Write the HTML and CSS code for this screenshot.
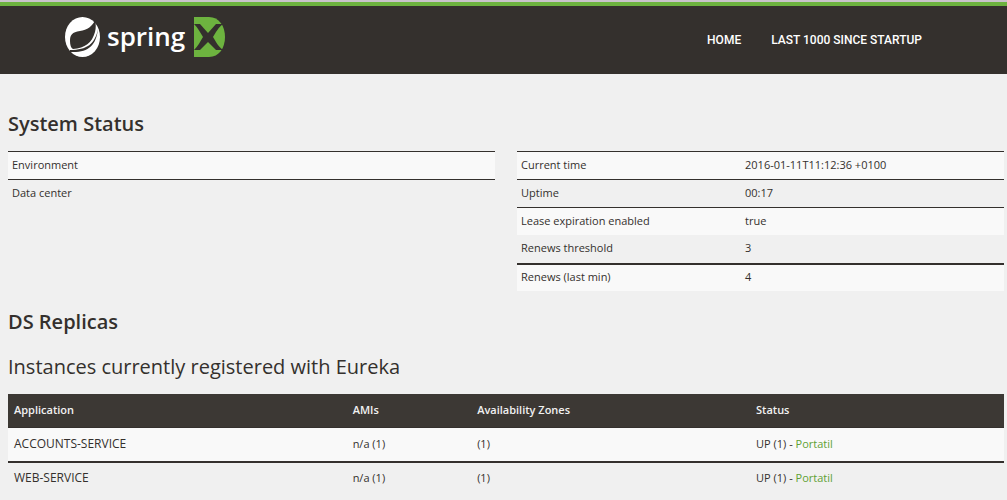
FILE: index.html
```html
<!DOCTYPE html>
<html lang="en">
<head>
<meta charset="utf-8">
<title>Eureka</title>
<link rel="stylesheet" href="styles.css">
</head>
<body>
<header class="navbar">
  <a class="brand" href="#" aria-label="Spring XD">
    <svg class="brand-leaf" viewBox="0 0 36 40" aria-hidden="true">
      <ellipse cx="17.5" cy="20" rx="17.5" ry="20" fill="#fff"/>
      <path d="M30 3C28 9 22 13 15 14C7 15 5 18 5 24C5 28 6 31 8 32C20 31 27 26 30 15C31 11 31 7 30 3Z" fill="#34302d"/>
      <path d="M33 12C30 27 22 33 5 33V35C23 36 31 29 33 12Z" fill="#34302d"/>
    </svg>
    <span class="brand-name">spring</span>
    <svg class="brand-xd" viewBox="0 0 32 40" aria-hidden="true">
      <path d="M0 0H15C25 0 31 9 31 20S25 40 15 40H0Z" fill="#6db33f"/>
      <path d="M0 7H6L14 16L22 7H29C24 11 22 15 19 20C22 25 24 29 29 33H22L14 25L6 33H0C4 29 6 25 9 20C6 15 4 11 0 7Z" fill="#34302d"/>
    </svg>
  </a>
  <nav class="nav">
    <a href="#">HOME</a>
    <a href="#">LAST 1000 SINCE STARTUP</a>
  </nav>
</header>
<main class="content">
  <h1 class="heading">System Status</h1>
  <div class="status">
    <table class="facts">
      <tr><td>Environment</td><td></td></tr>
      <tr><td>Data center</td><td></td></tr>
    </table>
    <table class="facts">
      <tr><td>Current time</td><td>2016-01-11T11:12:36 +0100</td></tr>
      <tr><td>Uptime</td><td>00:17</td></tr>
      <tr><td>Lease expiration enabled</td><td>true</td></tr>
      <tr class="no-rule"><td>Renews threshold</td><td>3</td></tr>
      <tr class="thick-rule"><td>Renews (last min)</td><td>4</td></tr>
    </table>
  </div>
  <h1 class="heading">DS Replicas</h1>
  <h2 class="heading heading-light">Instances currently registered with Eureka</h2>
  <table class="instances">
    <thead>
      <tr><th class="col-app">Application</th><th class="col-ami">AMIs</th><th class="col-zone">Availability Zones</th><th>Status</th></tr>
    </thead>
    <tbody>
      <tr><td class="app">ACCOUNTS-SERVICE</td><td>n/a (1)</td><td>(1)</td><td>UP (1) - <a href="#">Portatil</a></td></tr>
      <tr><td class="app">WEB-SERVICE</td><td>n/a (1)</td><td>(1)</td><td>UP (1) - <a href="#">Portatil</a></td></tr>
    </tbody>
  </table>
</main>
</body>
</html>
```
FILE: styles.css
```css
* { box-sizing: border-box; }
body {
  margin: 0;
  background: #f0f0f0;
  color: #34302d;
  font-family: "Open Sans", "Noto Sans", sans-serif;
  font-size: 11px;
  border-top: 2px solid #c9c4cb;
}
a { text-decoration: none; }
.navbar {
  display: flex;
  justify-content: space-between;
  align-items: center;
  height: 72px;
  padding: 0 85px 0 65px;
  background: #34302d;
  border-top: 4px solid #6db33f;
}
.brand {
  display: flex;
  align-items: center;
  gap: 6px;
  padding-bottom: 6px;
  color: #fff;
}
.brand-leaf { width: 36px; height: 40px; }
.brand-xd { width: 32px; height: 40px; margin-left: 3px; }
.brand-name {
  font-family: "Open Sans", sans-serif;
  font-size: 26px;
  font-weight: 600;
  line-height: 38px;
  padding-bottom: 2px;
}
.nav { display: flex; gap: 30px; }
.nav a {
  color: #fff;
  font-family: Roboto, sans-serif;
  font-size: 12px;
  font-weight: 500;
  line-height: 20px;
}
.content { padding: 36px 3px 0 8px; }
.heading {
  margin: 0 0 13px;
  font-size: 20px;
  line-height: 28px;
  font-weight: 600;
}
.heading-light { margin-top: 17px; font-weight: 400; }
.status {
  display: grid;
  grid-template-columns: 1fr 1fr;
  gap: 22px;
  align-items: start;
  margin-bottom: 17px;
}
table {
  width: 100%;
  border-collapse: separate;
  border-spacing: 0;
  table-layout: fixed;
}
.facts td {
  height: 28px;
  padding: 0 4px 3px;
  border-top: 1px solid #34302d;
}
.facts td:first-child { width: 46%; }
.facts tr:nth-child(odd), .instances tbody tr:nth-child(odd) { background: #f9f9f9; }
.facts .no-rule td { border-top: 0; }
.facts .thick-rule td { border-top-width: 2px; }
.instances th, .instances td {
  height: 34px;
  padding: 0 6px 2px;
  text-align: left;
}
.instances td { height: 33px; }
.instances th {
  background: #3c3834;
  color: #f1f1f1;
  font-size: 11px;
  font-weight: 600;
  border-bottom: 1px solid #34302d;
}
.instances tr + tr td { height: 36px; padding-bottom: 6px; border-top: 2px solid #34302d; }
.instances a { color: #5fa134; }
.instances .app { font-size: 12px; }
.col-app { width: 34%; }
.col-ami { width: 12.5%; }
.col-zone { width: 28%; }
```
